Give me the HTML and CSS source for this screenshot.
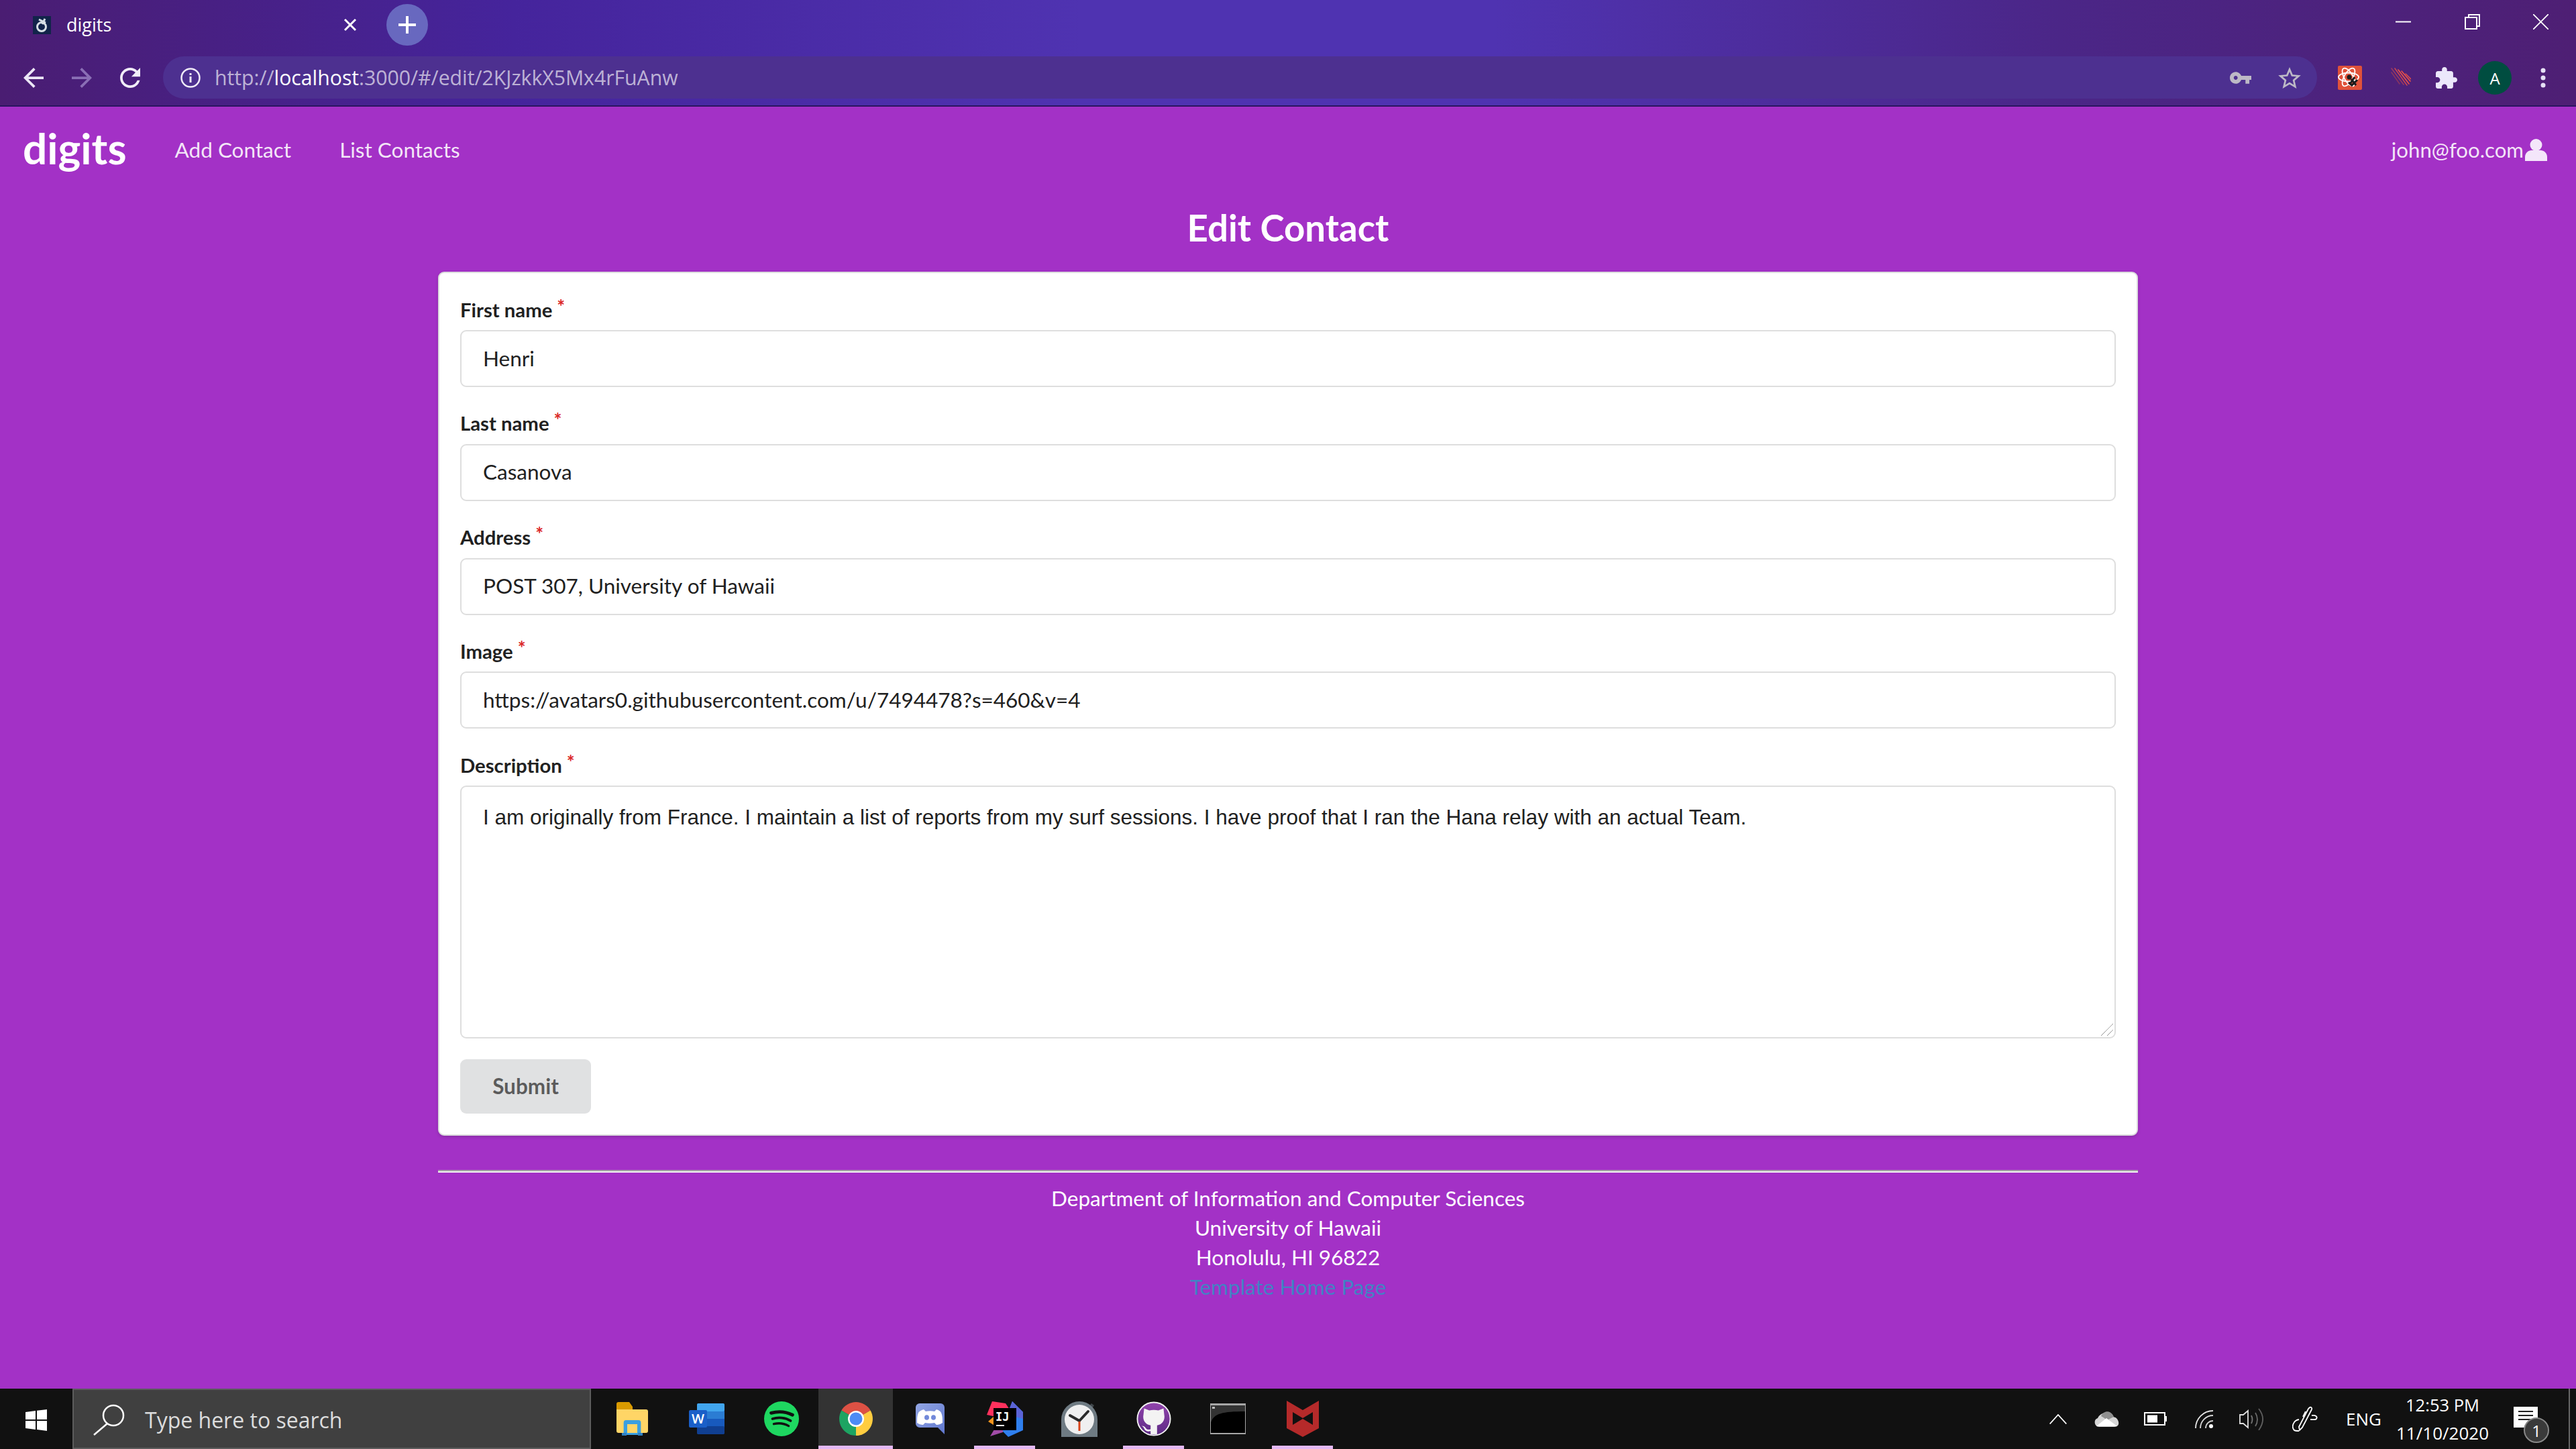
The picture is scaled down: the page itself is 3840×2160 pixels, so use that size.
FILE: index.html
```html
<!DOCTYPE html>
<html lang="en">
<head>
<meta charset="utf-8">
<title>digits</title>
<link rel="stylesheet" href="styles.css">
</head>
<body>
<header class="browser">
  <div class="tabstrip">
    <div class="tab">
      <svg class="favicon" viewBox="0 0 27 27"><rect width="27" height="27" fill="#12244a"/><circle cx="13" cy="16" r="6.500" fill="none" stroke="#d8e0e6" stroke-width="3"/><path d="M9 5l10 5M18 4l-4 8" stroke="#d8e0e6" stroke-width="3"/></svg>
      <span class="tab-title">digits</span>
      <svg class="tab-close" viewBox="0 0 20 20"><path d="M2 2l16 16M18 2L2 18" stroke="#fff" stroke-width="3"/></svg>
    </div>
    <div class="newtab"><svg viewBox="0 0 32 32" class="newtab-plus"><path d="M16 3v26M3 16h26" stroke="#fff" stroke-width="4"/></svg></div>
    <div class="winctl">
      <div class="winbtn"><svg class="winicon" viewBox="0 0 23 23"><path d="M0 11.500h23" stroke="#fff" stroke-width="2"/></svg></div>
      <div class="winbtn"><svg class="winicon" viewBox="0 0 23 23"><path d="M6 5V1h16v17h-4" fill="none" stroke="#fff" stroke-width="2"/><rect x="1" y="5" width="17" height="17" fill="none" stroke="#fff" stroke-width="2"/></svg></div>
      <div class="winbtn"><svg class="winicon" viewBox="0 0 23 23"><path d="M0 0l23 23M23 0L0 23" stroke="#fff" stroke-width="1.800"/></svg></div>
    </div>
  </div>
  <div class="toolbar">
    <div class="toolcell"><svg class="navicon" viewBox="4 4 16 16"><path d="M20 11H7.830l5.590-5.590L12 4l-8 8 8 8 1.410-1.410L7.830 13H20v-2z" fill="#ece7f6"/></svg></div>
    <div class="toolcell"><svg class="navicon" viewBox="4 4 16 16"><path d="M4 11h12.170l-5.590-5.590L12 4l8 8-8 8-1.410-1.410L16.170 13H4v-2z" fill="#8a6fb5"/></svg></div>
    <div class="toolcell"><svg class="navicon" viewBox="4 4 16 16"><path d="M17.650 6.350C16.200 4.900 14.210 4 12 4c-4.420 0-7.990 3.580-7.990 8s3.570 8 7.990 8c3.730 0 6.840-2.550 7.730-6h-2.080c-.82 2.330-3.040 4-5.650 4-3.310 0-6-2.690-6-6s2.690-6 6-6c1.660 0 3.140.69 4.220 1.780L13 11h7V4l-2.350 2.350z" fill="#f1edf8"/></svg></div>
    <div class="omnibox">
      <svg class="info" viewBox="0 0 30 30"><circle cx="15" cy="15" r="13.500" fill="none" stroke="#efeaf7" stroke-width="2.500"/><rect x="13.500" y="13" width="3" height="9" fill="#efeaf7"/><rect x="13.500" y="8" width="3" height="3" fill="#efeaf7"/></svg>
      <span class="url"><span class="url-dim">http://</span><span class="url-host">localhost</span><span class="url-dim">:3000/#/edit/2KJzkkX5Mx4rFuAnw</span></span>
      <svg class="keyicon" viewBox="1 6 22 12"><path d="M12.650 10C11.830 7.670 9.610 6 7 6c-3.310 0-6 2.690-6 6s2.690 6 6 6c2.610 0 4.830-1.670 5.650-4H17v4h4v-4h2v-4H12.650zM7 14c-1.100 0-2-.9-2-2s.9-2 2-2 2 .9 2 2-.9 2-2 2z" fill="#bdb9c6"/></svg>
      <svg class="staricon" viewBox="2 2 20 19"><path d="M22 9.240l-7.190-.62L12 2 9.190 8.630 2 9.240l5.460 4.730L5.820 21 12 17.270 18.180 21l-1.630-7.030L22 9.240zM12 15.400l-3.760 2.270 1-4.280-3.320-2.880 4.380-.38L12 6.100l1.710 4.040 4.380.38-3.320 2.880 1 4.280L12 15.400z" fill="#bdb9c6"/></svg>
    </div>
    <div class="toolcell ext-first"><svg class="exticon" viewBox="0 0 36 36"><rect width="36" height="36" rx="2" fill="#e0523a"/><g fill="none" stroke="#fff" stroke-width="1.800"><ellipse cx="16" cy="17" rx="15" ry="6.500"/><ellipse cx="16" cy="17" rx="15" ry="6.500" transform="rotate(60 16 17)"/><ellipse cx="16" cy="17" rx="15" ry="6.500" transform="rotate(120 16 17)"/></g><circle cx="17" cy="17" r="3.500" fill="#1c1c1c"/><path d="M20 20l7 9M25 17l-7 10M29 21l-8 8M16 25l6 5" stroke="#1c1c1c" stroke-width="3"/></svg></div>
    <div class="toolcell"><svg class="streak" viewBox="0 0 30 30"><g stroke-width="1.600" stroke-linecap="round"><path d="M1 1l18 24" stroke="#9a3a60"/><path d="M1 7l12 17" stroke="#8a3560"/><path d="M6 1l18 25" stroke="#c9474f"/><path d="M11 3l16 21" stroke="#ee5347"/><path d="M16 5l13 15" stroke="#ee5347"/><path d="M22 9l8 8" stroke="#d94c4a"/></g></svg></div>
    <div class="toolcell"><svg class="puzzle" viewBox="2 1 21 21"><path d="M20.500 11H19V7c0-1.100-.9-2-2-2h-4V3.500C13 2.120 11.880 1 10.500 1S8 2.120 8 3.500V5H4c-1.100 0-1.990.9-1.990 2v3.800H3.500c1.490 0 2.700 1.210 2.700 2.700s-1.210 2.700-2.700 2.700H2V20c0 1.100.9 2 2 2h3.800v-1.500c0-1.490 1.210-2.700 2.700-2.700 1.490 0 2.700 1.210 2.700 2.700V22H17c1.100 0 2-.9 2-2v-4h1.500c1.380 0 2.500-1.120 2.500-2.500S21.880 11 20.500 11z" fill="#ebe7fb"/></svg></div>
    <div class="toolcell"><div class="avatar">A</div></div>
    <div class="toolcell"><svg class="kebab" viewBox="0 0 8 30"><circle cx="4" cy="4" r="3.500" fill="#e6e0f5"/><circle cx="4" cy="15" r="3.500" fill="#e6e0f5"/><circle cx="4" cy="26" r="3.500" fill="#e6e0f5"/></svg></div>
  </div>
</header>

<main class="page">
  <nav class="navbar">
    <a class="brand">digits</a>
    <a class="navlink">Add Contact</a>
    <a class="navlink">List Contacts</a>
    <span class="user">john@foo.com<svg class="usericon" viewBox="0 0 33 33"><circle cx="16.500" cy="9" r="9" fill="#f4e6fa"/><path d="M0 33v-6c0-6 5-10 10-10h13c5 0 10 4 10 10v6z" fill="#f4e6fa"/></svg></span>
  </nav>
  <h1 class="title">Edit Contact</h1>
  <form class="card">
    <div class="field"><label class="label">First name<span class="req">*</span></label><input class="input" value="Henri"></div>
    <div class="field"><label class="label">Last name<span class="req">*</span></label><input class="input" value="Casanova"></div>
    <div class="field"><label class="label">Address<span class="req">*</span></label><input class="input" value="POST 307, University of Hawaii"></div>
    <div class="field"><label class="label">Image<span class="req">*</span></label><input class="input" value="https://avatars0.githubusercontent.com/u/7494478?s=460&amp;v=4"></div>
    <div class="field"><label class="label">Description<span class="req">*</span></label>
      <div class="area-wrap">
        <textarea class="area">I am originally from France. I maintain a list of reports from my surf sessions. I have proof that I ran the Hana relay with an actual Team.</textarea>
        <svg class="grip" viewBox="0 0 18 18"><path d="M0 18L18 0M9 18l9-9" stroke="#666" stroke-width="1" stroke-dasharray="1 .5"/></svg>
      </div>
    </div>
    <button type="button" class="submit">Submit</button>
  </form>
  <footer class="foot">
    <hr class="rule">
    <div class="foot-text">
      <div>Department of Information and Computer Sciences</div>
      <div>University of Hawaii</div>
      <div>Honolulu, HI 96822</div>
      <a class="foot-link">Template Home Page</a>
    </div>
  </footer>
</main>

<div class="taskbar">
  <div class="start"><svg class="winlogo" viewBox="0 0 32 32"><path d="M0 4l15-2v13H0zM17 1.800L32 0v15H17zM0 17h15v13L0 28zM17 17h15v15l-15-2z" fill="#fff"/></svg></div>
  <div class="search">
    <svg class="magnify" viewBox="0 0 47 47"><circle cx="30" cy="17" r="15" fill="none" stroke="#fff" stroke-width="2.500"/><path d="M21 29L1 46" stroke="#fff" stroke-width="2.500"/></svg>
    <span class="search-text">Type here to search</span>
  </div>
  <div class="apps">
    <div class="app"><svg class="folder" viewBox="0 0 47 50"><path d="M0 3a3 3 0 0 1 3-3h16l5 7v5H0z" fill="#d99a00"/><path d="M0 11h44a3 3 0 0 1 3 3v29a3 3 0 0 1-3 3H3a3 3 0 0 1-3-3z" fill="#ffd566"/><path d="M8 46V28a4 4 0 0 1 4-4h23a4 4 0 0 1 4 4v18z" fill="#3a9fe0" transform="translate(4 3) scale(.83 1)"/><rect x="16" y="33" width="15" height="13" fill="#ffd566"/><path d="M8 46h7v4H8zM32 46h7v4h-7z" fill="#2f7fc0"/></svg></div>
    <div class="app"><svg class="word" viewBox="0 0 53 46"><rect x="12" y="0" width="41" height="46" rx="3" fill="#185abd"/><rect x="12" y="0" width="41" height="12" rx="2" fill="#41a5ee"/><rect x="12" y="12" width="41" height="11" fill="#2b7cd3"/><rect x="12" y="34" width="41" height="12" rx="2" fill="#103f91"/><rect x="0" y="10" width="27" height="26" rx="2" fill="#1a5fc8"/><text x="13.500" y="30" class="word-w">W</text></svg></div>
    <div class="app"><svg class="appicon" viewBox="0 0 54 54"><circle cx="27" cy="27" r="27" fill="#1ed760"/><g fill="none" stroke="#111" stroke-linecap="round"><path d="M11 18c11-3 23-2 33 3" stroke-width="5"/><path d="M13 27c9-3 20-2 28 3" stroke-width="4"/><path d="M15 35c8-2 16-1 23 3" stroke-width="3.500"/></g></svg></div>
    <div class="app app-on app-mark"><svg class="appicon" viewBox="0 0 52 52"><path d="M26 26L4.400 13.500A25 25 0 0 1 47.600 13.500z" fill="#dd5144"/><path d="M26 26L47.600 13.500A25 25 0 0 1 26 51z" fill="#ffcd40"/><path d="M26 26L26 51A25 25 0 0 1 4.400 13.500z" fill="#1da462"/><circle cx="26" cy="26" r="12" fill="#fff"/><circle cx="26" cy="26" r="9.500" fill="#4c8bf5"/></svg></div>
    <div class="app"><svg class="discord" viewBox="0 0 43 46"><defs><linearGradient id="dg" x1="0" y1="0" x2="1" y2="1"><stop offset="0" stop-color="#93a6e4"/><stop offset="1" stop-color="#6078cf"/></linearGradient></defs><path d="M6 0h31a6 6 0 0 1 6 6v40l-10-10H6a6 6 0 0 1-6-6V6a6 6 0 0 1 6-6z" fill="url(#dg)"/><path d="M12 9l3 3c4-1 9-1 13 0l3-3c4 1 6 3 7 5 2 4 2 9 2 15-3 2-6 3-9 3l-3-3c-5 1-9 1-14 0l-3 3c-3 0-6-1-9-3 0-6 0-11 2-15 1-2 4-4 8-5z" fill="#fff"/><ellipse cx="16.500" cy="21" rx="3.500" ry="3.800" fill="#7289da"/><ellipse cx="26.500" cy="21" rx="3.500" ry="3.800" fill="#7289da"/></svg></div>
    <div class="app app-mark"><svg class="intellij" viewBox="0 0 54 53"><path d="M38 0l16 16v27l-22 10-10-10z" fill="#2f7fee"/><path d="M38 0l16 16v10L30 20z" fill="#5b63d6"/><path d="M0 20L8 0l20 3 6 9-6 14z" fill="#fe315d"/><path d="M2 30l9-8 2 15z" fill="#f7961e"/><path d="M5 52l6-10 13-4 0 8z" fill="#a24ca8"/><rect x="10" y="10" width="34" height="33" fill="#000"/><text x="13" y="29" class="ij-text">IJ</text><rect x="14" y="35" width="12" height="2" fill="#fff"/></svg></div>
    <div class="app"><svg class="stopwatch" viewBox="0 0 54 53"><path d="M45 3l4 3-4 6-5-4z" fill="#3f4549"/><path d="M0 53V27a27 27 0 0 1 54 0v26z" fill="#6f7b83"/><circle cx="27" cy="27" r="22" fill="#f0f0f0"/><path d="M27 29L13 21M27 29L40 15" stroke="#2b2b2b" stroke-width="4" stroke-linecap="round"/><path d="M27 30v14" stroke="#d9441a" stroke-width="3"/></svg></div>
    <div class="app app-mark"><svg class="appicon" viewBox="0 0 54 54"><defs><linearGradient id="gh" x1="0" y1="0" x2="0" y2="1"><stop offset="0" stop-color="#9244ad"/><stop offset="1" stop-color="#5c2a84"/></linearGradient></defs><circle cx="27" cy="27" r="25.500" fill="url(#gh)" stroke="#f2f2f2" stroke-width="2"/><path d="M12 11l8 3c4-1 10-1 14 0l8-3 1 9c2 9-3 16-11 17v14H22v-5c-5 1-8 0-10-4-1-2-2-3-4-4 3 0 5 1 7 4 2 2 4 2 7 1v-6c-8-1-13-8-11-17z" fill="#f3f3f3"/></svg></div>
    <div class="app"><svg class="terminal" viewBox="0 0 53 46"><rect width="53" height="46" fill="#a7a7a7"/><rect x="1" y="3" width="51" height="41" fill="#333"/><path d="M1 44V28C6 15 18 12 52 12v32z" fill="#000"/><rect x="3" y="5" width="4" height="3" fill="#bbb"/></svg></div>
    <div class="app app-mark"><svg class="mcafee" viewBox="0 0 48 54"><path d="M0 0l24 14L48 0v41L24 54 0 41z" fill="#b52a2a"/><path d="M9 17l15 9 15-9v19l-15-9-15 9z" fill="#111"/></svg></div>
  </div>
  <div class="tray">
    <svg class="t-chev" viewBox="0 0 26 15"><path d="M.7 14.500L13 1l12.300 13.500" fill="none" stroke="#fff" stroke-width="1.800"/></svg>
    <svg class="t-cloud" viewBox="0 0 37 23"><path d="M7 23C0 23-2 12 5 10 8 2 22-3 28 8c9 1 12 15 2 15z" fill="#d6d6d6"/><path d="M10 7c4-9 15-9 19 1l-10 5-4-3z" fill="#8f8f8f"/><path d="M3 22l15-12 16 12z" fill="#fff"/></svg>
    <svg class="t-batt" viewBox="0 0 34 20"><rect x="1" y="1" width="30" height="18" fill="none" stroke="#fff" stroke-width="2"/><rect x="5" y="4.500" width="15" height="11" fill="#fff"/><rect x="31" y="6" width="3" height="8" fill="#fff"/></svg>
    <svg class="t-wifi" viewBox="0 0 27 27"><g fill="none" stroke-width="1.800"><path d="M1 27A26 26 0 0 1 27 1" stroke="#e4e4e4"/><path d="M8 27A19 19 0 0 1 27 8" stroke="#d8d8d8"/><path d="M16 27a11 11 0 0 1 11-11" stroke="#cfcfcf"/></g><circle cx="24" cy="24" r="3" fill="#fff"/></svg>
    <svg class="t-vol" viewBox="0 0 36 33"><path d="M1 10h5l7-6v25l-7-6H1z" fill="none" stroke="#e0e0e0" stroke-width="1.800"/><g fill="none" stroke-width="1.800"><path d="M18 11c2 4 2 8 0 12" stroke="#777"/><path d="M24 7c4 6 4 14 0 20" stroke="#6a6a6a"/><path d="M29 1c8 10 8 21 0 32" stroke="#5f5f5f"/></g></svg>
    <svg class="t-pen" viewBox="0 0 40 39"><g fill="none" stroke="#fff" stroke-width="1.800"><path d="M26 2c2-1 4 1 3 3L15 32l-4 4-1-5L24 4z"/><path d="M20 8l-4 8"/><path d="M29 14c6-1 9 2 7 5-1 2-4 1-9 1"/><path d="M10 20C2 21-2 31 3 36c1 1 5 1 7 1"/></g></svg>
    <span class="t-eng">ENG</span>
    <div class="t-clock"><span class="t-time">12:53 PM</span><span>11/10/2020</span></div>
    <div class="t-notify">
      <svg class="t-note" viewBox="0 0 36 31"><path d="M0 0h36v31H0z" fill="#fff"/><path d="M7 7h22M7 13h22M7 19h22" stroke="#222" stroke-width="2"/></svg>
      <span class="t-badge">1</span>
    </div>
    <div class="t-desk"></div>
  </div>
</div>
</body>
</html>
```
FILE: styles.css
```css
* { box-sizing: border-box; }
html, body { margin: 0; padding: 0; }
body {
  width: 3840px;
  height: 2160px;
  display: flex;
  flex-direction: column;
  overflow: hidden;
  background: #a331c6;
  font-family: Lato, "Open Sans", sans-serif;
  font-size: 31.500px;
  color: #fff;
}
svg { display: block; flex: none; }

/* browser frame */
.browser {
  height: 159px;
  flex: none;
  border-bottom: 2px solid #2a1560;
  background: linear-gradient(90deg, #4a1d72 0%, #45249c 20%, #4f33b1 42%, #4f33b1 58%, #4b2687 80%, #4e1f74 100%);
  font-family: "Open Sans", sans-serif;
}
.tabstrip { height: 75px; display: flex; align-items: flex-start; }
.tab { width: 570px; height: 75px; display: flex; align-items: center; padding: 0 38px 0 49px; }
.favicon { width: 27px; height: 27px; margin-top: -1px; }
.tab-title { margin-left: 23px; font-size: 27px; color: #fff; margin-top: -3px; }
.tab-close { width: 20px; height: 20px; margin-left: auto; margin-top: -1px; }
.newtab { width: 62px; height: 62px; margin: 6px 0 0 6px; border-radius: 50%; background: #6868bf; display: flex; align-items: center; justify-content: center; }
.newtab-plus { width: 32px; height: 32px; }
.winctl { margin-left: auto; display: flex; padding-right: 1px; }
.winbtn { width: 102.500px; height: 64px; display: flex; align-items: center; justify-content: center; }
.winicon { width: 23px; height: 23px; }

.toolbar { height: 82px; display: flex; align-items: center; padding-left: 14px; }
.toolcell { width: 72px; height: 72px; display: flex; align-items: center; justify-content: center; }
.navicon { width: 30px; height: 30px; }
.omnibox {
  width: 3211px;
  height: 63px;
  margin-left: 13px;
  margin-top: -1px;
  border-radius: 32px;
  background: #4d3090;
  display: flex;
  align-items: center;
  padding-left: 26px;
}
.info { width: 30px; height: 30px; }
.url { margin-left: 21px; font-size: 30.200px; white-space: nowrap; }
.url-dim { color: rgba(255, 255, 255, 0.65); }
.url-host { color: #fff; }
.keyicon { width: 32px; height: 18px; margin-left: auto; }
.staricon { width: 34px; height: 32px; margin: 0 24px 0 40px; }
.ext-first { margin-left: 13px; }
.exticon { width: 36px; height: 36px; }
.streak { width: 30px; height: 30px; margin-left: 8px; }
.puzzle { width: 32px; height: 32px; }
.avatar { width: 50px; height: 50px; border-radius: 50%; background: #004d40; color: #fff; font-size: 24px; display: flex; align-items: center; justify-content: center; }
.kebab { width: 8px; height: 30px; }

/* page */
.page { flex: 1; display: flex; flex-direction: column; align-items: center; }
.navbar { width: 100%; height: 128px; display: flex; align-items: center; padding: 0 43px 0 34px; }
.brand { font-size: 64px; font-weight: 700; color: #fff; margin-right: 72px; margin-top: -5px; }
.navlink { color: rgba(255, 255, 255, 0.9); margin-right: 72px; }
.user { margin-left: auto; display: flex; align-items: center; font-size: 31.200px; color: rgba(255, 255, 255, 0.9); }
.usericon { width: 33px; height: 33px; margin-left: 2px; }
.title { margin: 0; height: 118px; font-size: 54.600px; line-height: 104px; font-weight: 700; color: #fff; }

.card {
  width: 2534px;
  height: 1288px;
  flex: none;
  background: #fff;
  border: 2px solid #dcdcde;
  border-radius: 9px;
  box-shadow: 0 2px 4px rgba(34, 36, 38, 0.2);
  padding: 31px 31px 0;
  display: flex;
  flex-direction: column;
  align-items: flex-start;
  color: #212121;
}
.field { width: 100%; margin-bottom: 30.800px; }
.label { display: block; height: 54px; padding-top: 3.500px; font-size: 29.300px; line-height: 40px; font-weight: 700; color: #212121; }
.req { color: #db2828; margin-left: 7px; position: relative; top: -6px; font-size: 28px; }
.input {
  display: block;
  width: 100%;
  height: 85px;
  padding: 0 32px 2px;
  border: 2px solid #dedede;
  border-radius: 9px;
  background: #fff;
  font-family: Lato, sans-serif;
  font-size: 31.500px;
  color: #212121;
  outline: none;
}
.area-wrap { position: relative; height: 377px; }
.area {
  display: block;
  width: 100%;
  height: 377px;
  padding: 27px 32px;
  border: 2px solid #dedede;
  border-radius: 9px;
  resize: none;
  font-family: "Liberation Sans", Arial, sans-serif;
  font-size: 31.500px;
  line-height: 36px;
  color: #212121;
  outline: none;
}
.grip { position: absolute; right: 4px; bottom: 4px; width: 18px; height: 18px; }
.submit {
  width: 195px;
  height: 81px;
  border: 0;
  border-radius: 9px;
  background: #e0e1e2;
  font-family: Lato, sans-serif;
  font-size: 31.500px;
  font-weight: 700;
  color: rgba(0, 0, 0, 0.6);
}

.foot { width: 2534px; flex: none; }
.rule { margin: 51px 0 0; height: 4px; border: 0; border-top: 2px solid #a5a5a5; border-bottom: 2px solid #f3f3f3; }
.foot-text { margin-top: 16px; text-align: center; line-height: 44px; color: #fff; }
.foot-link { display: block; color: #4183c4; }

/* taskbar */
.taskbar { height: 90px; flex: none; display: flex; background: #111; font-family: "Open Sans", sans-serif; color: #fff; }
.start { width: 108px; display: flex; align-items: center; padding: 4px 0 0 38px; }
.winlogo { width: 32px; height: 32px; }
.search { width: 773px; display: flex; align-items: center; padding-left: 29px; background: #404040; border: 2px solid #5c5c5c; }
.magnify { width: 47px; height: 47px; margin-top: 2px; }
.search-text { margin-left: 30px; font-size: 32px; color: #dcdcdc; margin-top: 2px; }
.apps { display: flex; margin-left: 6px; }
.app { width: 111px; height: 90px; display: flex; align-items: center; justify-content: center; position: relative; }
.app-on { background: #333; }
.app-mark::after { content: ""; position: absolute; left: 10px; right: 10px; bottom: 0; height: 5px; background: #e3b8f5; }
.app-on.app-mark::after { left: 0; right: 0; }
.appicon { width: 52px; height: 54px; }
.folder { width: 47px; height: 50px; }
.word { width: 53px; height: 46px; }
.word-w { font-family: "Open Sans", sans-serif; font-size: 20px; font-weight: 600; fill: #fff; text-anchor: middle; }
.ij-text { font-family: "DejaVu Sans Mono", monospace; font-size: 17px; font-weight: 700; fill: #fff; }
.discord { width: 43px; height: 46px; }
.intellij { width: 54px; height: 53px; }
.stopwatch { width: 54px; height: 53px; }
.terminal { width: 53px; height: 46px; }
.mcafee { width: 48px; height: 54px; }

.tray { margin-left: auto; display: flex; align-items: center; }
.t-chev { width: 26px; height: 15px; }
.t-cloud { width: 37px; height: 23px; margin-left: 41px; }
.t-batt { width: 34px; height: 20px; margin-left: 37px; }
.t-wifi { width: 27px; height: 27px; margin-left: 42px; }
.t-vol { width: 36px; height: 33px; margin-left: 39px; }
.t-pen { width: 40px; height: 39px; margin-left: 43px; }
.t-eng { width: 52px; margin-left: 40px; font-size: 26px; }
.t-clock { width: 160px; margin-left: 12px; display: flex; flex-direction: column; align-items: center; font-size: 26px; line-height: 42px; }
.t-time { font-size: 25.500px; }
.t-notify { width: 53px; height: 90px; margin-left: 26px; position: relative; }
.t-note { position: absolute; left: 0; top: 27px; width: 36px; height: 31px; }
.t-badge { position: absolute; left: 15px; top: 43px; width: 38px; height: 38px; border-radius: 50%; background: #3a3a3a; border: 2px solid #888; display: flex; align-items: center; justify-content: center; font-size: 24px; color: #fff; }
.t-desk { width: 2px; height: 90px; margin: 0 9px 0 29px; background: #666; }
```
